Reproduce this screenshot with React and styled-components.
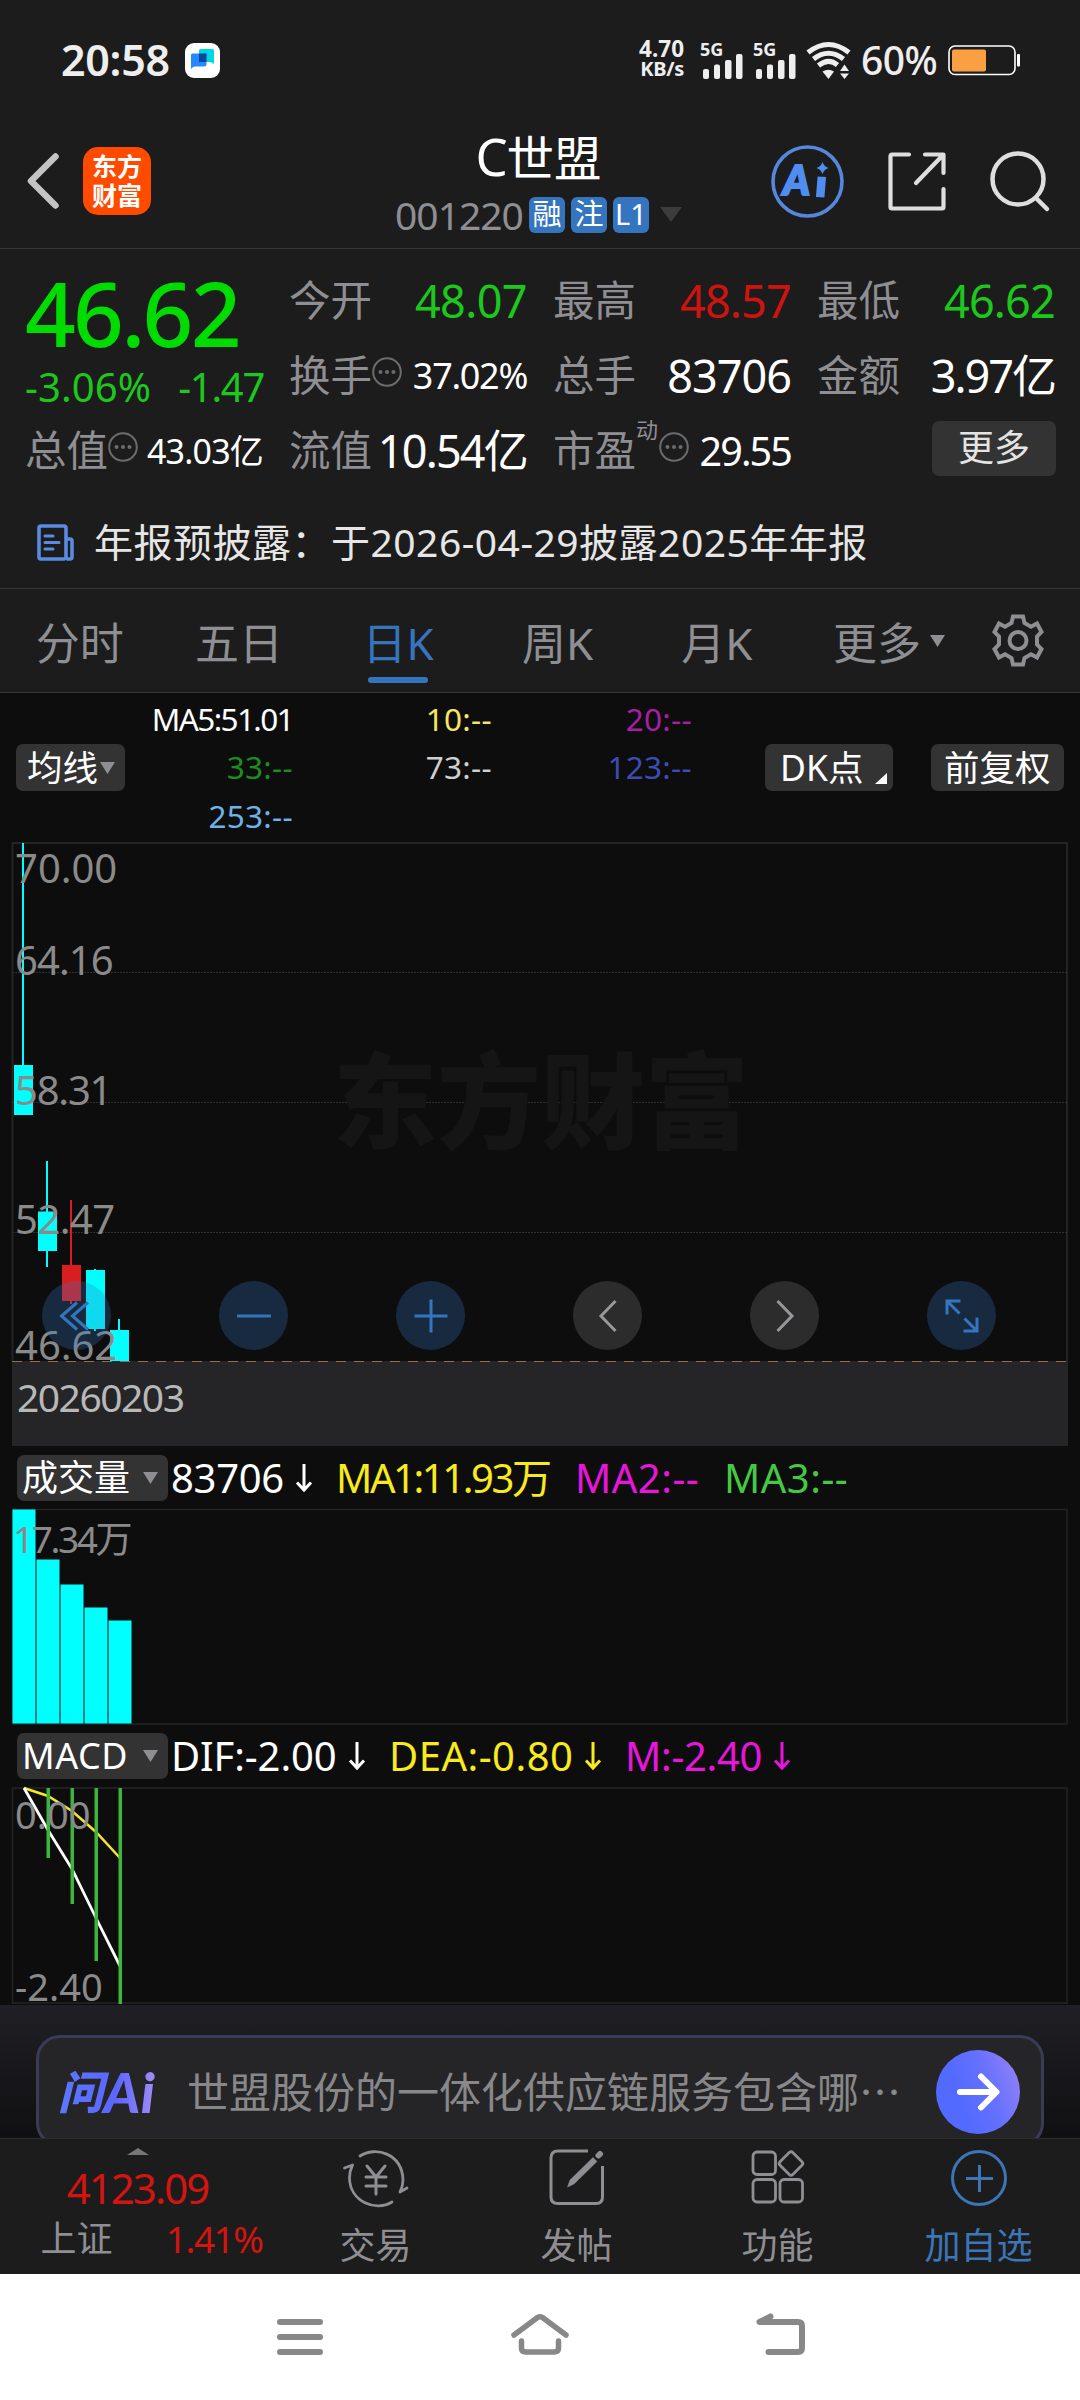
import React from 'react';
import styled, { createGlobalStyle } from 'styled-components';

const candles = [
  { x: 11, high: 1, top: 223, bottom: 273, low: 273, color: '#00ffff' },
  { x: 35, high: 319, top: 369.5, bottom: 409, low: 425, color: '#00ffff' },
  { x: 59, high: 358, top: 423, bottom: 459, low: 462, color: '#d81e1e' },
  { x: 83, high: 427, top: 428, bottom: 487, low: 489, color: '#00ffff' },
  { x: 107, high: 477, top: 488, bottom: 519, low: 519, color: '#00ffff' },
];

const volumes = [214, 164, 139, 116, 103];

const macdBars = [
  { x: 36, h: 70 },
  { x: 60, h: 116 },
  { x: 84, h: 173 },
  { x: 108, h: 216 },
];

const averages = [
  { text: 'MA5:51.01', color: '#ffffff', space: -1.6 },
  { text: '10:--', color: '#f7e463' },
  { text: '20:--', color: '#a51fa5' },
  { text: '33:--', color: '#1e8c1e' },
  { text: '73:--', color: '#cfcfcf' },
  { text: '123:--', color: '#3c4cb4' },
  { text: '253:--', color: '#6cb4e8' },
];

const Signal = () => (
  <SignalBox>
    <SignalText>5G</SignalText>
    <svg width="40" height="26" viewBox="0 0 40 26" fill="#eeeeee">
      <rect x="0" y="16" width="6" height="10" rx="2" />
      <rect x="11" y="11.5" width="6" height="14.5" rx="2" />
      <rect x="22" y="7" width="6.5" height="19" rx="2" />
      <rect x="33" y="1" width="6.5" height="25" rx="2" />
    </svg>
  </SignalBox>
);

const Dots = () => (
  <DotsSvg width="30" height="30" viewBox="0 0 30 30">
    <circle cx="15" cy="15" r="13.8" fill="none" stroke="#6c6c70" strokeWidth="2" />
    <circle cx="8.5" cy="15" r="2" fill="#6c6c70" />
    <circle cx="15" cy="15" r="2" fill="#6c6c70" />
    <circle cx="21.5" cy="15" r="2" fill="#6c6c70" />
  </DotsSvg>
);

const Down = ({ color }) => (
  <DownSvg width="16" height="30" viewBox="0 0 16 30" fill="none" stroke={color} strokeWidth="3">
    <path d="M8 1V27M1 19.5L8 27L15 19.5" />
  </DownSvg>
);

const Triangle = () => (
  <svg width="15" height="12" viewBox="0 0 15 12">
    <path d="M0 0H15L7.5 12Z" fill="#8e8e93" />
  </svg>
);

const Quote = ({ label, sup, dots, value, size = 45, space = -1, color = '#ffffff' }) => (
  <QuoteCell>
    <Label>{label}</Label>
    {sup && <Sup>{sup}</Sup>}
    {dots && <Dots />}
    <Value $size={size} $space={space} $color={color}>
      {value}
    </Value>
  </QuoteCell>
);

const App = () => {
  return (
    <Page>
      <GlobalStyle />
      <StatusBar>
        <Clock>20:58</Clock>
        <ChatApp>
          <svg width="24" height="22" viewBox="0 0 24 22">
            <path d="M8 1.5Q8 0 9.5 0H21.5Q23 0 23 1.5V15Q21 13 18 13H8Z" fill="#00d8e0" />
            <path d="M0 6Q0 4.5 1.5 4.5H15.5V15Q15.5 17.5 13 17.5H4Q1.5 17.5 0 20Z" fill="#2489ff" />
            <path d="M8 4.5H15.5V13H8Z" fill="#0a45a0" />
          </svg>
        </ChatApp>
        <StatusRight>
          <Speed>
            <SpeedNum>4.70</SpeedNum>
            <SpeedUnit>KB/s</SpeedUnit>
          </Speed>
          <Signal />
          <Signal />
          <WifiSvg width="46" height="37" viewBox="0 0 46 37">
            <g fill="none" stroke="#eeeeee" strokeWidth="5">
              <path d="M2 10.5Q22.5 -5.5 43 10.5" />
              <path d="M7.5 17Q22.5 5.5 37.5 17" />
              <path d="M12.5 23.5Q22.5 15.5 31.5 23" />
            </g>
            <path d="M16.5 29.5Q22.5 26 28 29.5L22.5 37Z" fill="#eeeeee" />
            <path d="M34 29L38.5 22.5L43 29ZM34 31.5H43L38.5 37Z" fill="#eeeeee" />
          </WifiSvg>
          <Percent>60%</Percent>
          <svg width="72" height="31" viewBox="0 0 72 31">
            <rect x="1" y="1" width="66" height="28.5" rx="6" fill="none" stroke="#ffffff" strokeWidth="1.6" />
            <rect x="4" y="4.5" width="34" height="22" rx="2" fill="#fb9f43" />
            <rect x="69" y="9" width="3" height="12.5" rx="1" fill="#ffffff" />
          </svg>
        </StatusRight>
      </StatusBar>

      <Header>
        <HeaderLeft>
          <svg width="32" height="56" viewBox="0 0 32 56" fill="none" stroke="#c4c4c4" strokeWidth="6.5" strokeLinecap="round" strokeLinejoin="round">
            <path d="M28.5 3.5L4 28L28.5 52.5" />
          </svg>
          <Brand>
            <span>东方</span>
            <span>财富</span>
          </Brand>
        </HeaderLeft>
        <HeaderTitle>
          <Name>
            <NameLetter>C</NameLetter>世盟
          </Name>
          <CodeRow>
            <Code>001220</Code>
            <Badge>融</Badge>
            <Badge>注</Badge>
            <Badge>L1</Badge>
            <svg width="22" height="15" viewBox="0 0 22 15">
              <path d="M0 0H22L11 15Z" fill="#3c3c3c" />
            </svg>
          </CodeRow>
        </HeaderTitle>
        <HeaderRight>
          <svg width="73" height="73" viewBox="0 0 73 73">
            <circle cx="36.5" cy="36.5" r="34.5" fill="none" stroke="#5587dd" strokeWidth="3.6" />
            <text x="12" y="50" fontFamily="Lato" fontWeight="900" fontStyle="italic" fontSize="41" fill="#4f8df0" stroke="#4f8df0" strokeWidth="2">
              A
            </text>
            <path d="M50.5 36L49.5 48" stroke="#4f8df0" strokeWidth="8.5" strokeLinecap="square" />
            <path d="M51.5 17Q53 21.5 57.5 23Q53 24.5 51.5 29Q50 24.5 45.5 23Q50 21.5 51.5 17Z" fill="#4f8df0" />
          </svg>
          <svg width="58" height="59" viewBox="0 0 58 59" fill="none" stroke="#dedede" strokeWidth="4.2" strokeLinecap="round" strokeLinejoin="round">
            <path d="M21 2.5H4Q2.5 2.5 2.5 4V55Q2.5 56.5 4 56.5H54Q55.5 56.5 55.5 55V37" />
            <path d="M37 2.5H55.5V21M55 3L28 31" />
          </svg>
          <svg width="60" height="60" viewBox="0 0 60 60" fill="none" stroke="#dedede" strokeWidth="4.5" strokeLinecap="round">
            <circle cx="28" cy="28" r="25.5" />
            <path d="M46 47L57 58" />
          </svg>
        </HeaderRight>
      </Header>

      <Quotes>
        <PriceCell>
          <Price>46.62</Price>
          <Change>
            <ChangeValue $space={0.1}>-3.06%</ChangeValue>
            <ChangeValue $space={-1.3}>-1.47</ChangeValue>
          </Change>
        </PriceCell>
        <Quote label="今开" value="48.07" space={-0.6} color="#1dc81d" />
        <Quote label="最高" value="48.57" space={-0.8} color="#cf1410" />
        <Quote label="最低" value="46.62" space={-0.8} color="#1dc81d" />
        <Quote label="换手" dots value="37.02%" size={36} space={-1.3} />
        <Quote label="总手" value="83706" />
        <Quote label="金额" value="3.97亿" space={-2} />
        <Quote label="总值" dots value="43.03亿" size={34} space={-0.8} />
        <Quote label="流值" value="10.54亿" space={-1.8} />
        <Quote label="市盈" sup="动" dots value="29.55" size={39.5} space={-1.9} />
        <MoreCell>
          <MoreButton>更多</MoreButton>
        </MoreCell>
      </Quotes>

      <Notice>
        <svg width="37" height="37" viewBox="0 0 37 37" fill="none" stroke="#5a8be0" strokeWidth="3.6" strokeLinejoin="round">
          <path d="M28 35H4Q2 35 2 33V4Q2 2 4 2H27Q29 2 29 4V33Q29 35 31 35H33Q35 35 35 33V17Q35 15 33 15H29" />
          <path d="M8 12H16M8 18.5H22M8 25H16" strokeWidth="3" strokeLinecap="round" />
        </svg>
        <NoticeText>年报预披露：于2026-04-29披露2025年年报</NoticeText>
      </Notice>

      <Tabs>
        <Tab>分时</Tab>
        <Tab>五日</Tab>
        <Tab $active>日K</Tab>
        <Tab>周K</Tab>
        <Tab>月K</Tab>
        <Tab $wide>
          更多
          <Triangle />
        </Tab>
        <GearSvg width="52" height="53" viewBox="0 0 52 53" fill="none" stroke="#8e8e93" strokeWidth="4">
          <path d="M21 2.5H31L32.5 9L39 12.8L45 9.5L49.5 18L45 22.5V30.5L49.5 35L45 43.5L39 40.2L32.5 44L31 50.5H21L19.5 44L13 40.2L7 43.5L2.5 35L7 30.5V22.5L2.5 18L7 9.5L13 12.8L19.5 9Z" />
          <circle cx="26" cy="26.5" r="8.5" />
        </GearSvg>
      </Tabs>

      <AverageBar>
        <ChipButton $width={109} $pad={11}>
          均线
          <Triangle />
        </ChipButton>
        <AverageGrid>
          {averages.map(a => (
            <Average key={a.text} $color={a.color} $space={a.space}>
              {a.text}
            </Average>
          ))}
        </AverageGrid>
        <ChipButton $width={128} $pad={15}>
          DK点
          <CornerSvg width="12" height="11" viewBox="0 0 12 11">
            <path d="M12 0V11H0Z" fill="#ffffff" />
          </CornerSvg>
        </ChipButton>
        <ChipButton $width={133} $pad={13}>
          前复权
        </ChipButton>
      </AverageBar>

      <Chart $height={519}>
        <Watermark>东方财富</Watermark>
        <svg width="1056" height="519" viewBox="0 0 1056 519">
          <path d="M0.5 519V1M1055 1V519" stroke="#242424" strokeWidth="2" />
          <path d="M0 1H1056" stroke="#242424" strokeWidth="2" />
          <path d="M0 130.5H1056M0 260.5H1056M0 390.5H1056" stroke="#303030" strokeDasharray="2 1" />
          {candles.map(c => (
            <g key={c.x} fill={c.color}>
              <rect x={c.x - 1} y={c.high} width="2" height={c.low - c.high} />
              <rect x={c.x - 9} y={c.top} width="19" height={c.bottom - c.top} />
            </g>
          ))}
        </svg>
        <AxisLabel $top={3}>70.00</AxisLabel>
        <AxisLabel $top={95} $space={-0.9}>
          64.16
        </AxisLabel>
        <AxisLabel $top={225} $space={-1.2}>
          58.31
        </AxisLabel>
        <AxisLabel $top={354} $space={-0.5}>
          52.47
        </AxisLabel>
        <AxisLabel $top={480}>46.62</AxisLabel>
        <Controls>
          <RoundButton>
            <BackSvg width="30" height="32" viewBox="0 0 30 32" fill="none" stroke="#3575bf" strokeWidth="3">
              <path d="M18 2.5L2.5 16L18 29.5M29 2.5L13.5 16L29 29.5" />
            </BackSvg>
          </RoundButton>
          <RoundButton>
            <svg width="34" height="34" viewBox="0 0 34 34" stroke="#3575bf" strokeWidth="3">
              <path d="M0 17H34" />
            </svg>
          </RoundButton>
          <RoundButton>
            <svg width="34" height="34" viewBox="0 0 34 34" stroke="#3575bf" strokeWidth="3">
              <path d="M0.5 17H33.5M17 0.5V33.5" />
            </svg>
          </RoundButton>
          <RoundButton $grey>
            <svg width="18" height="32" viewBox="0 0 18 32" fill="none" stroke="#98989c" strokeWidth="3">
              <path d="M16.5 1L2 16L16.5 31" />
            </svg>
          </RoundButton>
          <RoundButton $grey>
            <svg width="18" height="32" viewBox="0 0 18 32" fill="none" stroke="#98989c" strokeWidth="3">
              <path d="M1.5 1L16 16L1.5 31" />
            </svg>
          </RoundButton>
          <RoundButton>
            <svg width="34" height="34" viewBox="0 0 34 34" fill="none" stroke="#3575bf" strokeWidth="3">
              <path d="M2 15.5V2H15.5M2 2L14.5 14.5M32 18.5V32H18.5M32 32L19.5 19.5" />
            </svg>
          </RoundButton>
        </Controls>
      </Chart>
      <DateBand>20260203</DateBand>

      <IndicatorBar $height={63}>
        <IndicatorButton>
          成交量
          <Triangle />
        </IndicatorButton>
        <Indicator $width={165} $space={-0.3} $color="#ffffff">
          83706
          <Down color="#ffffff" />
        </Indicator>
        <Indicator $width={239} $space={-2.4} $color="#f7ea1e">
          MA1:11.93万
        </Indicator>
        <Indicator $width={149} $space={0.5} $color="#e815dd">
          MA2:--
        </Indicator>
        <Indicator $width={149} $space={0.5} $color="#45c945">
          MA3:--
        </Indicator>
      </IndicatorBar>
      <Chart $height={216}>
        <svg width="1056" height="216" viewBox="0 0 1056 216">
          <path d="M0.5 0.5H1055V215H0.5Z" fill="none" stroke="#242424" strokeWidth="1.5" />
          {volumes.map((h, i) => (
            <rect key={h} x={0.5 + i * 24} y={214.5 - h} width="23" height={h} fill="#00ffff" />
          ))}
        </svg>
        <AxisLabel $top={7} $left={1} $size={37} $space={-2.4}>
          17.34万
        </AxisLabel>
      </Chart>

      <IndicatorBar $height={62}>
        <IndicatorButton $space={0.5}>
          MACD
          <Triangle />
        </IndicatorButton>
        <Indicator $width={218} $space={-0.1} $color="#ffffff">
          DIF:-2.00
          <Down color="#ffffff" />
        </Indicator>
        <Indicator $width={236} $space={0.5} $color="#f7ea1e">
          DEA:-0.80
          <Down color="#f7ea1e" />
        </Indicator>
        <Indicator $width={190} $space={-0.3} $color="#e815dd">
          M:-2.40
          <Down color="#e815dd" />
        </Indicator>
      </IndicatorBar>
      <Chart $height={218}>
        <svg width="1056" height="218" viewBox="0 0 1056 218">
          <path d="M0.5 1H1055V216H0.5Z" fill="none" stroke="#242424" strokeWidth="1.5" />
          <path d="M12 1L36 9L60 24L84 45L108 71" fill="none" stroke="#f7e52a" strokeWidth="2.5" />
          <path d="M12 1L36 43L60 82L84 131L108 179" fill="none" stroke="#ffffff" strokeWidth="2.8" />
          {macdBars.map(b => (
            <rect key={b.x} x={b.x - 1.5} y="1" width="3.5" height={b.h} fill="#3db53a" />
          ))}
        </svg>
        <AxisLabel $top={4} $size={38}>
          0.00
        </AxisLabel>
        <AxisLabel $top={176} $size={38}>
          -2.40
        </AxisLabel>
      </Chart>

      <AskArea>
        <AskBox>
          <AskLogo>
            <AskWord>问</AskWord>Ai
          </AskLogo>
          <AskText>世盟股份的一体化供应链服务包含哪⋯</AskText>
          <SendButton>
            <svg width="44" height="40" viewBox="0 0 44 40" fill="none" stroke="#ffffff" strokeWidth="6" strokeLinecap="round" strokeLinejoin="round">
              <path d="M4 20H40M25 4.5L40.5 20L25 35.5" />
            </svg>
          </SendButton>
        </AskBox>
      </AskArea>

      <Footer>
        <IndexCell>
          <svg width="22" height="7" viewBox="0 0 22 7">
            <path d="M0 7L11 0L22 7Z" fill="#77777a" />
          </svg>
          <IndexValue>4123.09</IndexValue>
          <IndexRow>
            <IndexName>上证</IndexName>
            <IndexChange>1.41%</IndexChange>
          </IndexRow>
        </IndexCell>
        <FooterItem>
          <svg width="66" height="60" viewBox="0 0 66 60" fill="none" stroke="#8e8e93" strokeWidth="2.8" strokeLinecap="round" strokeLinejoin="round">
            <path d="M17 7C32 -3 59 4 60 31Q60 37 57 43L64 39" />
            <path d="M49 53C33 63 7 53 6.5 29Q6.5 22 9.5 16L1.5 19" />
            <path d="M24 17L33 28L42 17M33 28V45M23 28H43M23 37H43" strokeWidth="3" />
          </svg>
          <span>交易</span>
        </FooterItem>
        <FooterItem>
          <svg width="56" height="56" viewBox="0 0 56 56" fill="none" stroke="#8e8e93" strokeWidth="3">
            <path d="M39 2H9Q2 2 2 9V48Q2 54.5 9 54.5H47Q53.5 54.5 53.5 48V17" />
            <path d="M18.5 38L21 31L44 8.5L48 12.5L25 35Z" fill="#8e8e93" strokeWidth="0.5" />
            <path d="M49.5 6.5L51 5" strokeWidth="6" strokeLinecap="round" />
          </svg>
          <span>发帖</span>
        </FooterItem>
        <FooterItem>
          <svg width="54" height="56" viewBox="0 0 54 56" fill="none" stroke="#8e8e93" strokeWidth="2.8" strokeLinejoin="round">
            <rect x="2" y="3" width="22.5" height="22.5" rx="4" />
            <rect x="2" y="30.5" width="22.5" height="22.5" rx="4" />
            <rect x="29" y="30.5" width="22.5" height="22.5" rx="4" />
            <rect x="31" y="5.5" width="18" height="18" rx="2.5" transform="rotate(45 40 14.5)" />
          </svg>
          <span>功能</span>
        </FooterItem>
        <FooterItem $active>
          <svg width="58" height="58" viewBox="0 0 58 58" fill="none" stroke="#3c76b8" strokeWidth="3">
            <circle cx="29" cy="29" r="26.5" />
            <path d="M16 29.5H43M29.5 16V43" />
          </svg>
          <span>加自选</span>
        </FooterItem>
      </Footer>

      <NavBar>
        <svg width="46" height="44" viewBox="0 0 46 44" stroke="#888888" strokeWidth="6" strokeLinecap="round">
          <path d="M3 7H43M3 22H43M3 37H43" />
        </svg>
        <svg width="58" height="44" viewBox="0 0 58 44" fill="none" stroke="#888888" strokeWidth="5.5" strokeLinecap="round" strokeLinejoin="round">
          <path d="M3 20L26.5 2.5Q29 1 31.5 2.5L55 20" />
          <path d="M10.5 26V33Q10.5 37 14.5 37H43Q47.5 37 47.5 33V26" />
        </svg>
        <svg width="50" height="44" viewBox="0 0 50 44" fill="none" stroke="#888888" strokeWidth="6" strokeLinecap="round" strokeLinejoin="round">
          <path d="M14.5 1.5L3.5 7H42Q46 7 46 11V33Q46 37 42 37H12.5" />
        </svg>
      </NavBar>
    </Page>
  );
};

export default App;

const GlobalStyle = createGlobalStyle`
  * {
    box-sizing: border-box;
  }
  body {
    margin: 0;
    background: #0d0d0d;
    font-family: 'Noto Sans', 'Noto Sans CJK SC', sans-serif;
  }
  svg {
    display: block;
    flex: none;
    overflow: visible;
  }
`;
const Page = styled.div`
  width: 1080px;
  height: 2400px;
  overflow: hidden;
  background: #0d0d0d;
  white-space: nowrap;
`;
const StatusBar = styled.div`
  height: 114px;
  padding: 6px 60px 0 61px;
  display: flex;
  align-items: center;
  background: #1c1c1c;
  color: #eeeeee;
`;
const Clock = styled.div`
  width: 124px;
  font-size: 43px;
  line-height: 50px;
  font-weight: 600;
  letter-spacing: -0.3px;
`;
const ChatApp = styled.div`
  width: 35px;
  height: 35px;
  border-radius: 9px;
  background: #ffffff;
  display: flex;
  align-items: center;
  justify-content: center;
`;
const StatusRight = styled.div`
  margin-left: auto;
  display: flex;
  align-items: center;
`;
const Speed = styled.div`
  width: 48px;
  margin: -3px 16px 0 0;
  display: flex;
  flex-direction: column;
  align-items: flex-end;
  font-weight: 700;
`;
const SpeedNum = styled.div`
  font-size: 22.5px;
  line-height: 21px;
`;
const SpeedUnit = styled.div`
  font-size: 20px;
  line-height: 20px;
  letter-spacing: -0.3px;
`;
const SignalBox = styled.div`
  position: relative;
  width: 43px;
  height: 37px;
  margin-right: 10px;
  padding: 11px 0 0 3px;
`;
const SignalText = styled.div`
  position: absolute;
  left: 0;
  top: -2px;
  font-size: 18px;
  line-height: 18px;
  font-weight: 700;
`;
const WifiSvg = styled.svg`
  margin-right: 9px;
`;
const Percent = styled.div`
  width: 87px;
  font-size: 39px;
  line-height: 44px;
  font-weight: 500;
  letter-spacing: -0.5px;
`;
const Header = styled.div`
  height: 135px;
  padding: 0 30px 0 27px;
  display: grid;
  grid-template-columns: 1fr auto 1fr;
  align-items: center;
  background: #1c1c1c;
  border-bottom: 1px solid #363636;
`;
const HeaderLeft = styled.div`
  display: flex;
  align-items: center;
  gap: 24px;
`;
const Brand = styled.div`
  width: 68px;
  height: 68px;
  border-radius: 15px;
  background: #ff4b00;
  color: #ffffff;
  display: flex;
  flex-direction: column;
  align-items: center;
  justify-content: center;
  font-size: 25px;
  line-height: 29px;
  font-weight: 700;
`;
const HeaderTitle = styled.div`
  display: flex;
  flex-direction: column;
  align-items: center;
`;
const Name = styled.div`
  height: 56px;
  margin-top: -2px;
  margin-bottom: 13px;
  font-size: 47.5px;
  line-height: 56px;
  color: #ffffff;
`;
const NameLetter = styled.span`
  font-size: 51px;
  line-height: 56px;
  letter-spacing: -1px;
`;
const CodeRow = styled.div`
  display: flex;
  align-items: center;
  gap: 6px;
  height: 36px;
`;
const Code = styled.div`
  font-size: 39px;
  line-height: 36px;
  letter-spacing: -1px;
  color: #8e8e93;
`;
const Badge = styled.div`
  width: 36px;
  height: 36px;
  border-radius: 6px;
  background: #3575bf;
  color: #ffffff;
  font-size: 29px;
  line-height: 34px;
  text-align: center;

  &:last-of-type {
    margin-right: 5px;
  }
`;
const HeaderRight = styled.div`
  display: flex;
  align-items: center;
  justify-content: flex-end;
  gap: 44px;
`;
const Quotes = styled.div`
  padding: 14px 24px 0 25px;
  display: grid;
  grid-template-columns: repeat(4, 1fr);
  grid-template-rows: repeat(3, 75px);
  column-gap: 25px;
  background: #1c1c1c;
`;
const PriceCell = styled.div`
  grid-row: span 2;
`;
const Price = styled.div`
  font-size: 89px;
  line-height: 100px;
  font-weight: 500;
  letter-spacing: -2.8px;
  color: #00dc00;
`;
const Change = styled.div`
  display: flex;
  justify-content: space-between;
  margin-top: 2px;
`;
const ChangeValue = styled.div`
  font-size: 40px;
  line-height: 44px;
  letter-spacing: ${({ $space }) => $space}px;
  color: #1dc81d;
`;
const QuoteCell = styled.div`
  display: flex;
  align-items: center;
`;
const Label = styled.div`
  font-size: 41.5px;
  line-height: 75px;
  color: #8e8e93;
`;
const Sup = styled.div`
  align-self: flex-start;
  width: 23px;
  font-size: 22px;
  line-height: 32px;
  color: #8e8e93;
`;
const DotsSvg = styled.svg`
  margin-top: -7px;
`;
const Value = styled.div`
  margin-left: auto;
  margin-right: 1px;
  font-size: ${({ $size }) => $size}px;
  letter-spacing: ${({ $space }) => $space}px;
  line-height: 70px;
  color: ${({ $color }) => $color};
`;
const MoreCell = styled.div`
  display: flex;
  align-items: center;
  justify-content: flex-end;
`;
const MoreButton = styled.div`
  width: 124px;
  height: 55px;
  margin-bottom: 4px;
  border-radius: 7px;
  background: #333333;
  color: #e4e4e4;
  font-size: 36px;
  line-height: 53px;
  text-align: center;
`;
const Notice = styled.div`
  height: 101px;
  padding: 9px 36px 0 37px;
  display: flex;
  align-items: center;
  gap: 20px;
  background: #1c1c1c;
  border-bottom: 1px solid #363636;
`;
const NoticeText = styled.div`
  margin-top: -2px;
  font-size: 39px;
  line-height: 50px;
  letter-spacing: 0.5px;
  color: #e6e6e6;
`;
const Tabs = styled.div`
  height: 104px;
  display: flex;
  align-items: center;
  background: #1c1c1c;
  border-bottom: 1px solid #363636;
`;
const Tab = styled.div`
  position: relative;
  flex: none;
  width: ${({ $wide }) => ($wide ? 185 : 159.3)}px;
  height: 101px;
  display: flex;
  align-items: center;
  justify-content: center;
  gap: 9px;
  font-size: 44px;
  color: ${({ $active }) => ($active ? '#3575bf' : '#8e8e93')};

  &::after {
    content: '';
    display: ${({ $active }) => ($active ? 'block' : 'none')};
    position: absolute;
    left: 49px;
    bottom: 8px;
    width: 60px;
    height: 6px;
    border-radius: 3px;
    background: #3575bf;
  }
`;
const GearSvg = styled.svg`
  margin-left: 11px;
`;
const AverageBar = styled.div`
  height: 149px;
  padding-left: 16px;
  display: flex;
  align-items: center;
`;
const ChipButton = styled.div`
  position: relative;
  flex: none;
  width: ${({ $width }) => $width}px;
  height: 47px;
  margin-right: 38px;
  padding-left: ${({ $pad }) => $pad}px;
  border-radius: 7px;
  background: #333333;
  color: #ffffff;
  display: flex;
  align-items: center;
  gap: 2px;
  font-size: 35.5px;
  line-height: 45px;

  &:first-child {
    margin-right: 0;
  }
`;
const CornerSvg = styled.svg`
  position: absolute;
  right: 6px;
  bottom: 7px;
`;
const AverageGrid = styled.div`
  flex: none;
  width: 567px;
  margin-right: 73px;
  display: grid;
  grid-template-columns: 168px 199px 200px;
  grid-auto-rows: 48.5px;
`;
const Average = styled.div`
  text-align: right;
  font-size: 31.5px;
  line-height: 48px;
  letter-spacing: ${({ $space = 0.3 }) => $space}px;
  color: ${({ $color }) => $color};
`;
const Chart = styled.div`
  position: relative;
  margin-left: 12px;
  width: 1056px;
  height: ${({ $height }) => $height}px;
`;
const Watermark = styled.div`
  position: absolute;
  left: 321px;
  top: 194px;
  font-size: 104px;
  line-height: 130px;
  font-weight: 900;
  color: #151515;
`;
const AxisLabel = styled.div`
  position: absolute;
  left: ${({ $left = 3 }) => $left}px;
  top: ${({ $top }) => $top}px;
  font-size: ${({ $size = 40 }) => $size}px;
  letter-spacing: ${({ $space = 0 }) => $space}px;
  line-height: 46px;
  color: #8a8a8a;
`;
const Controls = styled.div`
  position: absolute;
  left: 30px;
  top: 439px;
  display: flex;
  gap: 108px;
`;
const RoundButton = styled.div`
  width: 69px;
  height: 69px;
  border-radius: 50%;
  background: ${({ $grey }) => ($grey ? '#2c2c2c' : 'rgba(53, 117, 196, 0.28)')};
  display: flex;
  align-items: center;
  justify-content: center;
`;
const BackSvg = styled.svg`
  margin-right: 6px;
`;
const DateBand = styled.div`
  margin-left: 12px;
  width: 1056px;
  height: 85px;
  padding-left: 5px;
  background: #252527;
  background-image: repeating-linear-gradient(90deg, #8a7358 0 10px, transparent 10px 18px);
  background-size: 100% 1px;
  background-repeat: no-repeat;
  font-size: 39px;
  line-height: 72px;
  letter-spacing: -1.5px;
  color: #b8b8b8;
`;
const IndicatorBar = styled.div`
  height: ${({ $height }) => $height}px;
  padding-left: 17px;
  display: flex;
  align-items: center;
`;
const IndicatorButton = styled.div`
  width: 151px;
  height: 46px;
  margin-right: 3px;
  padding: 0 10px 0 5px;
  border-radius: 7px;
  background: #333333;
  color: #ffffff;
  display: flex;
  align-items: center;
  justify-content: space-between;
  font-size: 36px;
  line-height: 44px;
  letter-spacing: ${({ $space = 0 }) => $space}px;
`;
const Indicator = styled.div`
  width: ${({ $width }) => $width}px;
  display: flex;
  align-items: center;
  font-size: 40px;
  line-height: 46px;
  letter-spacing: ${({ $space }) => $space}px;
  color: ${({ $color }) => $color};
`;
const DownSvg = styled.svg`
  margin-left: 12px;
`;
const AskArea = styled.div`
  height: 133px;
  padding: 30px 36px 0;
  overflow: hidden;
  background: linear-gradient(#1f1f25, #101012);
`;
const AskBox = styled.div`
  height: 112px;
  padding: 2px 21px 0 19px;
  border: 3px solid #3a3b56;
  border-radius: 24px;
  background: #252527;
  display: flex;
  align-items: center;
`;
const AskLogo = styled.div`
  width: 129px;
  display: flex;
  align-items: center;
  font-family: Lato, 'Noto Sans CJK SC', sans-serif;
  font-size: 56px;
  line-height: 60px;
  font-weight: 900;
  font-style: italic;
  letter-spacing: 0.5px;
  color: transparent;
  background: linear-gradient(90deg, #5a78ff, #5b66ff 45%, #a08cf5 75%);
  background-clip: text;
`;
const AskWord = styled.span`
  font-size: 45px;
`;
const AskText = styled.div`
  font-size: 42px;
  line-height: 60px;
  color: #88888a;
`;
const SendButton = styled.div`
  width: 84px;
  height: 84px;
  margin-left: auto;
  border-radius: 50%;
  background: linear-gradient(70deg, #526aff 30%, #6470ff 60%, #9a84f5);
  display: flex;
  align-items: center;
  justify-content: center;
`;
const Footer = styled.div`
  height: 136px;
  display: flex;
  background: #1c1c1c;
  border-top: 1px solid #2c2c2c;
`;
const IndexCell = styled.div`
  width: 275px;
  padding-top: 9px;
  display: flex;
  flex-direction: column;
  align-items: center;
`;
const IndexValue = styled.div`
  margin-top: 9px;
  font-size: 42px;
  line-height: 48px;
  letter-spacing: -2px;
  color: #d31410;
`;
const IndexRow = styled.div`
  width: 222px;
  margin-left: 28px;
  display: flex;
  align-items: center;
  justify-content: space-between;
  line-height: 53px;
`;
const IndexName = styled.div`
  font-size: 36px;
  color: #8e8e93;
`;
const IndexChange = styled.div`
  font-size: 37px;
  letter-spacing: -1.5px;
  color: #d31410;
`;
const FooterItem = styled.div`
  width: 201px;
  padding-top: 10px;
  display: flex;
  flex-direction: column;
  align-items: center;
  justify-content: space-between;
  font-size: 36px;
  line-height: 56px;
  color: ${({ $active }) => ($active ? '#3c76b8' : '#8e8e93')};
`;
const NavBar = styled.div`
  height: 126px;
  padding: 41px 274px 0 277px;
  display: flex;
  justify-content: space-between;
  background: #ffffff;
`;
